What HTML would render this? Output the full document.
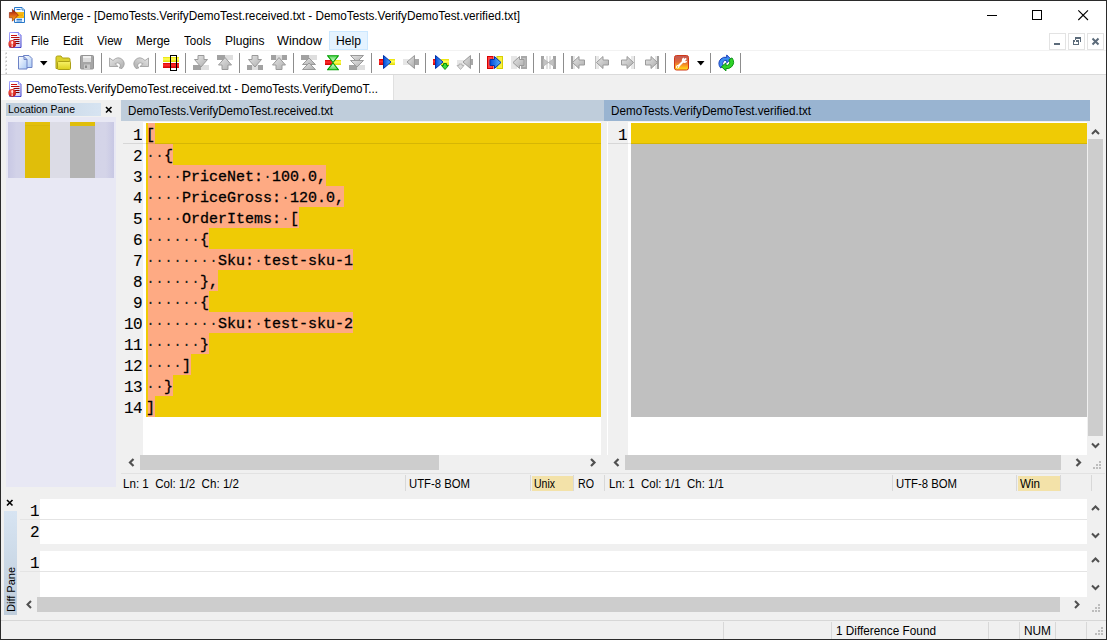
<!DOCTYPE html>
<html><head><meta charset="utf-8">
<style>
*{box-sizing:border-box;margin:0;padding:0}
html,body{width:1107px;height:640px;overflow:hidden;background:#f0f0f0}
body{position:relative;font-family:"Liberation Sans",sans-serif;font-size:12px;color:#000}
.a{position:absolute}
.t{position:absolute;white-space:nowrap;line-height:14px;transform-origin:0 50%}
.mono{font-family:"Liberation Mono",monospace;font-size:15px;line-height:21px;white-space:pre;-webkit-text-stroke:0.3px #000}
.ln{position:absolute;height:21px;left:0;right:0}
.num{position:absolute;text-align:right;font-family:"Liberation Mono",monospace;font-size:16px;letter-spacing:-0.6px;line-height:21px;padding-top:3px;height:21px;overflow:hidden;-webkit-text-stroke:0.12px #000}
.sal{background:linear-gradient(90deg,#efcb05 2px,#feaa83 2px);display:inline-block;height:21px;padding-top:4px;line-height:17px;vertical-align:top}
.d{-webkit-text-stroke:0;color:#222}
svg{position:absolute;overflow:visible}
</style></head><body>
<div class="a" style="left:1px;top:1px;width:1105px;height:49px;background:#fff;"></div>
<div class="a" style="left:1px;top:50px;width:1105px;height:1px;background:#f2f2f2;"></div>
<div class="a" style="left:1px;top:51px;width:1105px;height:23px;background:#fff;"></div>
<div class="a" style="left:1px;top:74px;width:1105px;height:1px;background:#dadada;"></div>
<div class="a" style="left:1px;top:75px;width:392px;height:25px;background:#fff;"></div>
<div class="a" style="left:393px;top:75px;width:1px;height:25px;background:#e0e0e0;"></div>
<svg style="left:8px;top:6px" width="18" height="18" viewBox="0 0 18 18"><path d="M6.500 1.500h7.500l2.500 2.500v12.500h-10z" fill="#f0f7ff" stroke="#2878c8"/><path d="M14 1.500v2.500h2.500" fill="#cfe4fa" stroke="#2878c8" stroke-width=".8"/><path d="M8.500 3.500h4M8.500 13.300h5.500M8.500 15h5.500" stroke="#2c7cd0" stroke-width="1.200"/><rect x="7" y="6.300" width="9" height="5.500" fill="#ffd028"/><rect x="7" y="6.300" width="9" height="1.300" fill="#f0a800"/><rect x="7" y="10.500" width="9" height="1.300" fill="#f0a800"/><rect x="10" y="8.300" width="5" height="1.500" fill="#f0a000"/><path d="M1.400 6.500h3v-3.300l6 5.800l-6 6.200v-3.400h-3z" fill="url(#garr)" stroke="#8c1800" stroke-width=".6" stroke-linejoin="round"/></svg>
<div class="t" style="left:30px;top:9px;font-size:12px;color:#000;transform:scaleX(0.9797);">WinMerge&nbsp;-&nbsp;[DemoTests.VerifyDemoTest.received.txt&nbsp;-&nbsp;DemoTests.VerifyDemoTest.verified.txt]</div>
<svg style="left:980px;top:1px" width="126" height="29" viewBox="0 0 126 29"><g stroke="#000" stroke-width="1" fill="none" shape-rendering="crispEdges"><path d="M7 14.500h10"/><rect x="52.500" y="9.500" width="9" height="9"/></g><path d="M98.300 9.300l9.700 9.700M108 9.300l-9.700 9.700" stroke="#000" stroke-width="1.100" fill="none"/></svg>
<svg style="left:6px;top:32px" width="16" height="17" viewBox="0 0 16 17"><path d="M3.500 .5h9l2.500 2.500v12.500h-11.500z" fill="url(#gmdif)" stroke="url(#gmdi)"/><path d="M12.500 .5v2.500h2.500" fill="#fff" stroke="#7878f8" stroke-width=".8"/><path d="M5 3.500h6M5 5.500h8.500M7.500 7.500h6M9 9.500h4.500M9 11.500h4.500" stroke="url(#grl)" stroke-width="1.100"/><circle cx="6.200" cy="11.900" r="3.800" fill="url(#gball)"/><path d="M6.200 9q1.200 1.200 0 3.500q-1.200-2.300 0-3.500z" fill="#fff" stroke="#fff" stroke-width=".6"/><circle cx="6.200" cy="14" r=".85" fill="#fff"/></svg>
<div class="a" style="left:329px;top:31px;width:39px;height:19px;background:#e5f3ff;border:1px solid #cce8ff"></div>
<div class="t" style="left:31px;top:34px;font-size:12px;color:#000;transform:scaleX(0.9310);">File</div>
<div class="t" style="left:63px;top:34px;font-size:12px;color:#000;transform:scaleX(0.9672);">Edit</div>
<div class="t" style="left:97px;top:34px;font-size:12px;color:#000;transform:scaleX(0.9693);">View</div>
<div class="t" style="left:136px;top:34px;font-size:12px;color:#000;transform:scaleX(0.9996);">Merge</div>
<div class="t" style="left:184px;top:34px;font-size:12px;color:#000;transform:scaleX(0.9639);">Tools</div>
<div class="t" style="left:225px;top:34px;font-size:12px;color:#000;transform:scaleX(1.0037);">Plugins</div>
<div class="t" style="left:277px;top:34px;font-size:12px;color:#000;transform:scaleX(1.0544);">Window</div>
<div class="t" style="left:336px;top:34px;font-size:12px;color:#000;transform:scaleX(1.0130);">Help</div>
<div class="a" style="left:1049px;top:33px;width:17px;height:17px;background:#fff;border:1px solid #e3e3e3"></div>
<div class="a" style="left:1068px;top:33px;width:17px;height:17px;background:#fff;border:1px solid #e3e3e3"></div>
<div class="a" style="left:1087px;top:33px;width:17px;height:17px;background:#fff;border:1px solid #e3e3e3"></div>
<svg style="left:1049px;top:33px" width="57" height="18" viewBox="0 0 57 18"><g fill="#5c6b7a" shape-rendering="crispEdges"><rect x="5" y="10" width="6" height="2"/><path d="M26 4h6v5h-1v-3h-4v3h-1zM24 7h6v5h-6zM25 9v2h4v-2z" fill-rule="evenodd"/></g><path d="M43.500 5.500l6 6M49.500 5.500l-6 6" stroke="#5c6b7a" stroke-width="2" fill="none"/></svg>
<svg width="0" height="0" style="left:0;top:0"><defs>
<linearGradient id="gdoc" x1="0" y1="0" x2="1" y2="1"><stop offset="0" stop-color="#fff"/><stop offset="1" stop-color="#a9c9f5"/></linearGradient>
<linearGradient id="gfold" x1="0" y1="0" x2="0" y2="1"><stop offset="0" stop-color="#f8f268"/><stop offset="1" stop-color="#dcd01c"/></linearGradient>
<linearGradient id="ggray" x1="0" y1="0" x2="1" y2="1"><stop offset="0" stop-color="#e6e6e6"/><stop offset="1" stop-color="#adadad"/></linearGradient>
<linearGradient id="gblue" x1="0" y1="0" x2="1" y2="0"><stop offset="0" stop-color="#0048d8"/><stop offset="1" stop-color="#58b4ff"/></linearGradient>
<linearGradient id="ggreen" x1="0" y1="0" x2="0" y2="1"><stop offset="0" stop-color="#50d850"/><stop offset="0.5" stop-color="#f4fff4"/><stop offset="1" stop-color="#50d850"/></linearGradient>
<linearGradient id="gyel" x1="0" y1="0" x2="0" y2="1"><stop offset="0" stop-color="#e8e000"/><stop offset="0.4" stop-color="#ffff60"/><stop offset="1" stop-color="#e0d800"/></linearGradient>
<linearGradient id="gred" x1="0" y1="0" x2="0" y2="1"><stop offset="0" stop-color="#d80000"/><stop offset="0.4" stop-color="#ff3030"/><stop offset="1" stop-color="#d00000"/></linearGradient>
<linearGradient id="gopt" x1="0" y1="0" x2="0" y2="1"><stop offset="0" stop-color="#c05858"/><stop offset="0.45" stop-color="#e06838"/><stop offset="0.75" stop-color="#ffa820"/><stop offset="1" stop-color="#ffe818"/></linearGradient>
<linearGradient id="garr" x1="0" y1="0" x2="0" y2="1"><stop offset="0" stop-color="#8c0c00"/><stop offset="0.45" stop-color="#d85818"/><stop offset="1" stop-color="#ffc010"/></linearGradient>
<linearGradient id="gmdi" x1="0" y1="0" x2="1" y2="1"><stop offset="0" stop-color="#a8a8ff"/><stop offset="1" stop-color="#3c3cc8"/></linearGradient>
<linearGradient id="gmdif" x1="0" y1="0" x2="1" y2="1"><stop offset="0.3" stop-color="#fff"/><stop offset="1" stop-color="#c0c0f8"/></linearGradient>
<linearGradient id="grl" x1="0" y1="0" x2="0" y2="1"><stop offset="0" stop-color="#d01010"/><stop offset="1" stop-color="#700000"/></linearGradient>
<radialGradient id="gball" cx="0.4" cy="0.35" r="0.7"><stop offset="0" stop-color="#ff6050"/><stop offset="1" stop-color="#c01010"/></radialGradient>
</defs></svg><svg style="left:4px;top:52px" width="4" height="22" viewBox="0 0 4 22"><g fill="#c2c2c2"><rect x="1.500" y="0.5" width="1.500" height="1.500"/><rect x="1" y="1.5" width="1" height="1" fill="#d8d8d8"/><rect x="1.500" y="4.5" width="1.500" height="1.500"/><rect x="1" y="5.5" width="1" height="1" fill="#d8d8d8"/><rect x="1.500" y="8.5" width="1.500" height="1.500"/><rect x="1" y="9.5" width="1" height="1" fill="#d8d8d8"/><rect x="1.500" y="12.5" width="1.500" height="1.500"/><rect x="1" y="13.5" width="1" height="1" fill="#d8d8d8"/><rect x="1.500" y="16.5" width="1.500" height="1.500"/><rect x="1" y="17.5" width="1" height="1" fill="#d8d8d8"/><rect x="1.500" y="20.5" width="1.500" height="1.500"/><rect x="1" y="21.5" width="1" height="1" fill="#d8d8d8"/></g></svg><svg style="left:18px;top:55px" width="16" height="16" viewBox="0 0 16 16"><path d="M5.5 .5h5.5l3 3v9h-8.5z" fill="url(#gdoc)" stroke="#6c82c6"/><path d="M.5 1.5h5.5l3 3v9.500h-8.5z" fill="url(#gdoc)" stroke="#6c82c6"/><path d="M6 1.500v3h3" fill="none" stroke="#6c82c6"/></svg><svg style="left:55px;top:55px" width="16" height="16" viewBox="0 0 16 16"><path d="M1 13.500v-11q0-1.500 1.500-1.500h3.500l1.500 2h6q1.500 0 1.500 1.500v9z" fill="#dcd22c" stroke="#aca016"/><rect x="2.500" y="6.500" width="13" height="8" rx="1" fill="url(#gfold)" stroke="#aca016"/></svg><svg style="left:80px;top:55px" width="16" height="16" viewBox="0 0 16 16"><rect x=".5" y=".5" width="13" height="13.500" rx="1" fill="#a6a6a6" stroke="#939393"/><rect x="3" y="1" width="8" height="6" fill="#dcdcdc"/><rect x="3" y="1" width="8" height="2" fill="#f0f0f0"/><rect x="4" y="9.500" width="6" height="4.500" fill="#c9c9c9"/><rect x="5" y="10.500" width="2" height="2.500" fill="#8c8c8c"/></svg><svg style="left:109px;top:57px" width="16" height="16" viewBox="0 0 16 16"><path d="M.5 1v8.500h8.500l-2.800-2.800q2.800-2 4.800 .3q1.300 2 -.8 4l2.800.5q4.200-4.500 .5-8.800q-4.500-4.200-9.500 .8z" fill="url(#ggray)" stroke="#9a9a9a" stroke-width=".8"/></svg><svg style="left:133px;top:57px" width="16" height="16" viewBox="0 0 16 16"><g transform="translate(16,0) scale(-1,1)"><path d="M.5 1v8.500h8.500l-2.800-2.800q2.800-2 4.800 .3q1.300 2 -.8 4l2.800.5q4.200-4.500 .5-8.800q-4.500-4.200-9.500 .8z" fill="url(#ggray)" stroke="#9a9a9a" stroke-width=".8"/></g></svg><svg style="left:163px;top:55px" width="16" height="16" viewBox="0 0 16 16"><rect x="0" y="2" width="16" height="5" fill="url(#gyel)"/><rect x="0" y="8" width="16" height="5" fill="url(#gred)"/><rect x="7.500" y=".5" width="6" height="15" fill="none" stroke="#000"/></svg><svg style="left:193px;top:55px" width="16" height="16" viewBox="0 0 16 16"><rect x="0" y="10" width="8" height="5" fill="#a2a2a2"/><rect x="8" y="10" width="8" height="5" fill="#dedede"/><path d="M5 .5h6v4h3.500l-6.500 7.500l-6.500-7.500h3.500z" fill="url(#ggray)" stroke="#9a9a9a"/></svg><svg style="left:217px;top:55px" width="16" height="16" viewBox="0 0 16 16"><rect x="0" y="0" width="8" height="5" fill="#a2a2a2"/><rect x="8" y="0" width="8" height="5" fill="#dedede"/><path d="M8 2.500l6.500 7.500h-3.500v4.500h-6v-4.500h-3.500z" fill="url(#ggray)" stroke="#9a9a9a"/></svg><svg style="left:247px;top:55px" width="16" height="16" viewBox="0 0 16 16"><rect x="0" y="10" width="5" height="5" fill="#a2a2a2"/><rect x="5" y="10" width="6" height="5" fill="#dedede"/><rect x="11" y="10" width="5" height="5" fill="#a2a2a2"/><path d="M5 .5h6v4h3.500l-6.500 7.500l-6.500-7.500h3.500z" fill="url(#ggray)" stroke="#9a9a9a"/></svg><svg style="left:271px;top:55px" width="16" height="16" viewBox="0 0 16 16"><rect x="0" y="0" width="5" height="5" fill="#a2a2a2"/><rect x="5" y="0" width="6" height="5" fill="#dedede"/><rect x="11" y="0" width="5" height="5" fill="#a2a2a2"/><path d="M8 2.500l6.500 7.500h-3.500v4.500h-6v-4.500h-3.500z" fill="url(#ggray)" stroke="#9a9a9a"/></svg><svg style="left:301px;top:55px" width="16" height="16" viewBox="0 0 16 16"><rect x="0" y="0" width="8" height="5" fill="#a2a2a2"/><rect x="8" y="0" width="8" height="5" fill="#dedede"/><path d="M8 3l6.500 6.500h-13z" fill="url(#ggray)" stroke="#9a9a9a"/><path d="M8 8l6.500 6.500h-13z" fill="url(#ggray)" stroke="#9a9a9a"/></svg><svg style="left:325px;top:55px" width="16" height="16" viewBox="0 0 16 16"><rect x="0" y="5" width="8" height="5" fill="url(#gred)"/><rect x="8" y="5" width="8" height="5" fill="url(#gyel)"/><path d="M2.500 .7h11l-5.500 6.800zM2.500 14.800h11l-5.500-6.800z" fill="url(#ggreen)" stroke="#00a000" stroke-width="1.100" stroke-linejoin="round"/></svg><svg style="left:349px;top:55px" width="16" height="16" viewBox="0 0 16 16"><rect x="0" y="10" width="8" height="5" fill="#a2a2a2"/><rect x="8" y="10" width="8" height="5" fill="#dedede"/><path d="M1.500 .5h13l-6.500 6.500z" fill="url(#ggray)" stroke="#9a9a9a"/><path d="M1.500 5.500h13l-6.500 6.500z" fill="url(#ggray)" stroke="#9a9a9a"/></svg><svg style="left:379px;top:55px" width="16" height="16" viewBox="0 0 16 16"><rect x="0" y="4" width="5" height="6" fill="url(#gred)"/><rect x="10" y="4" width="6" height="6" fill="url(#gyel)"/><path d="M4.500 .5l7.500 6.500l-7.500 6.500z" fill="url(#gblue)" stroke="#0030a8" stroke-linejoin="round"/></svg><svg style="left:403px;top:55px" width="16" height="16" viewBox="0 0 16 16"><rect x="0" y="4" width="6" height="6" fill="#e6e6e6"/><rect x="11" y="4" width="5" height="6" fill="#a8a8a8"/><path d="M11.500 .5l-7.500 6.500l7.500 6.500z" fill="url(#ggray)" stroke="#9a9a9a" stroke-linejoin="round"/></svg><svg style="left:433px;top:55px" width="16" height="16" viewBox="0 0 16 16"><rect x="0" y="4" width="3" height="6" fill="url(#gred)"/><rect x="8" y="4" width="8" height="6" fill="url(#gyel)"/><path d="M2.500 .5l7.500 6.500l-7.500 6.500z" fill="url(#gblue)" stroke="#0030a8" stroke-linejoin="round"/><path d="M10.500 8.500h3v2h2l-3.500 4l-3.500-4h2z" fill="#38dc38" stroke="#008800" stroke-width=".9"/></svg><svg style="left:457px;top:55px" width="16" height="16" viewBox="0 0 16 16"><rect x="0" y="5" width="8" height="5" fill="#e6e6e6"/><rect x="14" y="4" width="2" height="6" fill="#a8a8a8"/><path d="M2 9h3v1.500h2l-3.500 4l-3.500-4h2z" fill="#dcdcdc" stroke="#a8a8a8" stroke-width=".8"/><path d="M13.500 .5l-7.500 6.500l7.500 6.500z" fill="url(#ggray)" stroke="#9a9a9a" stroke-linejoin="round"/></svg><svg style="left:487px;top:55px" width="16" height="16" viewBox="0 0 16 16"><rect x=".5" y="1.500" width="5.500" height="12" fill="#ff4040" stroke="#d80000"/><rect x="10" y="1.500" width="5.500" height="12" fill="#f8f040" stroke="#d8d000"/><path d="M3 4.500h4.500v-3l6.500 6l-6.500 6v-3h-4.500z" fill="url(#gblue)" stroke="#0030a8" stroke-linejoin="round"/></svg><svg style="left:511px;top:55px" width="16" height="16" viewBox="0 0 16 16"><rect x="0" y="1" width="6" height="13" fill="#e6e6e6"/><rect x="10" y="1" width="6" height="13" fill="#a8a8a8"/><rect x="11.500" y="3" width="3" height="9" fill="#c4c4c4"/><path d="M13 4.500h-4.500v-3l-6.500 6l6.500 6v-3h4.500z" fill="url(#ggray)" stroke="#9a9a9a" stroke-linejoin="round"/></svg><svg style="left:541px;top:55px" width="16" height="16" viewBox="0 0 16 16"><rect x="0" y="1" width="3" height="13" fill="#a4a4a4"/><rect x="12" y="1" width="3" height="13" fill="#a4a4a4"/><rect x="5" y="1" width="2" height="13" fill="#e2e2e2"/><rect x="8" y="1" width="2" height="13" fill="#e2e2e2"/><path d="M2 3.500l5.500 4l-5.500 4zM13 3.500l-5.500 4l5.500 4z" fill="#c2c2c2" stroke="#a8a8a8" stroke-width=".6"/></svg><svg style="left:571px;top:55px" width="16" height="16" viewBox="0 0 16 16"><rect x="0" y="1" width="2" height="13" fill="#a0a0a0"/><rect x="2" y="1" width="2" height="13" fill="#e6e6e6"/><path d="M1.500 7.500l6.500-6v3.500h5.500v5h-5.500v3.500z" fill="url(#ggray)" stroke="#9a9a9a" stroke-linejoin="round"/></svg><svg style="left:595px;top:55px" width="16" height="16" viewBox="0 0 16 16"><rect x="0" y="1" width="4" height="13" fill="#e8e8e8"/><rect x="0" y="1" width="1" height="13" fill="#c0c0c0"/><path d="M1.500 7.500l6.500-6v3.500h5.500v5h-5.500v3.500z" fill="url(#ggray)" stroke="#9a9a9a" stroke-linejoin="round"/></svg><svg style="left:621px;top:55px" width="16" height="16" viewBox="0 0 16 16"><rect x="10" y="1" width="4" height="13" fill="#e8e8e8"/><rect x="13" y="1" width="1" height="13" fill="#c0c0c0"/><path d="M12.500 7.500l-6.500-6v3.500h-5.500v5h5.500v3.500z" fill="url(#ggray)" stroke="#9a9a9a" stroke-linejoin="round"/></svg><svg style="left:645px;top:55px" width="16" height="16" viewBox="0 0 16 16"><rect x="10" y="1" width="2" height="13" fill="#e6e6e6"/><rect x="12" y="1" width="2" height="13" fill="#a0a0a0"/><path d="M12.500 7.500l-6.500-6v3.500h-5.500v5h5.500v3.500z" fill="url(#ggray)" stroke="#9a9a9a" stroke-linejoin="round"/></svg><svg style="left:674px;top:55px" width="16" height="16" viewBox="0 0 16 16"><rect x=".5" y=".5" width="14" height="14.500" rx="2" fill="url(#gopt)" stroke="#d03818"/><path d="M3.500 12l8-8" stroke="#fff" stroke-width="2" stroke-linecap="round"/><path d="M10 2.500a2.800 2.800 0 1 0 3.300 3.300l-1.800 .4l-1.600-1.600z" fill="#fff"/><circle cx="3.700" cy="11.800" r="1.700" fill="#fff"/><circle cx="3.600" cy="12" r=".7" fill="#f0a020"/></svg><svg style="left:718px;top:55px" width="16" height="16" viewBox="0 0 16 16"><g transform="translate(-.3,-.3) scale(1.060)"><path d="M2.800 12.500q-3.500-4.500 .2-8.500q2.500-2.300 5.500-1.500v-2.300l4 4l-4 3.500v-2.300q-2-.5-3.200 1q-1.600 2 .3 4.300z" fill="#3c8cf0" stroke="#1038b8" stroke-width=".9" stroke-linejoin="round"/><path d="M13.500 3q3.300 4.500 -.5 8.500q-2.500 2.200-5.200 1.600v2.200l-4.300-4l4.300-3.500v2.300q1.800 .3 3-1.100q1.500-2-.2-4.200z" fill="#30d428" stroke="#089010" stroke-width=".9" stroke-linejoin="round"/></g></svg><div class="a" style="left:101px;top:53px;width:1px;height:20px;background:#8d8d8d"></div><div class="a" style="left:155px;top:53px;width:1px;height:20px;background:#8d8d8d"></div><div class="a" style="left:185px;top:53px;width:1px;height:20px;background:#8d8d8d"></div><div class="a" style="left:239px;top:53px;width:1px;height:20px;background:#8d8d8d"></div><div class="a" style="left:293px;top:53px;width:1px;height:20px;background:#8d8d8d"></div><div class="a" style="left:371px;top:53px;width:1px;height:20px;background:#8d8d8d"></div><div class="a" style="left:425px;top:53px;width:1px;height:20px;background:#8d8d8d"></div><div class="a" style="left:479px;top:53px;width:1px;height:20px;background:#8d8d8d"></div><div class="a" style="left:533px;top:53px;width:1px;height:20px;background:#8d8d8d"></div><div class="a" style="left:563px;top:53px;width:1px;height:20px;background:#8d8d8d"></div><div class="a" style="left:665px;top:53px;width:1px;height:20px;background:#8d8d8d"></div><div class="a" style="left:710px;top:53px;width:1px;height:20px;background:#8d8d8d"></div><div class="a" style="left:740px;top:53px;width:1px;height:20px;background:#8d8d8d"></div><svg style="left:40px;top:61px" width="8" height="5" viewBox="0 0 8 5"><path d="M0 0h7.500l-3.750 4.500z" fill="#000"/></svg><svg style="left:697px;top:61px" width="8" height="5" viewBox="0 0 8 5"><path d="M0 0h7.500l-3.750 4.500z" fill="#000"/></svg>
<svg style="left:6px;top:81px" width="16" height="17" viewBox="0 0 16 17"><path d="M3.500 .5h9l2.500 2.500v12.500h-11.500z" fill="url(#gmdif)" stroke="url(#gmdi)"/><path d="M12.500 .5v2.500h2.500" fill="#fff" stroke="#7878f8" stroke-width=".8"/><path d="M5 3.500h6M5 5.500h8.500M7.500 7.500h6M9 9.500h4.500M9 11.500h4.500" stroke="url(#grl)" stroke-width="1.100"/><circle cx="6.200" cy="11.900" r="3.800" fill="url(#gball)"/><path d="M6.200 9q1.200 1.200 0 3.500q-1.200-2.300 0-3.500z" fill="#fff" stroke="#fff" stroke-width=".6"/><circle cx="6.200" cy="14" r=".85" fill="#fff"/></svg>
<div class="t" style="left:26px;top:82px;font-size:12px;color:#000;transform:scaleX(0.9667);">DemoTests.VerifyDemoTest.received.txt&nbsp;-&nbsp;DemoTests.VerifyDemoT...</div>
<div class="a" style="left:6px;top:103px;width:95px;height:13px;background:linear-gradient(90deg,#bfcddb,#d7e4f2);"></div>
<div class="t" style="left:8px;top:102px;font-size:11px;color:#000;transform:scaleX(0.9526);">Location&nbsp;Pane</div>
<svg style="left:105px;top:106px" width="8" height="8" viewBox="0 0 8 8"><path d="M1 1l5.5 5.5M6.5 1L1 6.5" stroke="#000" stroke-width="1.6" fill="none"/></svg>
<div class="a" style="left:6px;top:117px;width:110px;height:370px;background:#e8e8f4;"></div>
<div class="a" style="left:8px;top:122px;width:106px;height:56px;background:linear-gradient(90deg,#c8c8e4,#d2d2e8 8%,#d4d4e8 92%,#c8c8e4);"></div>
<div class="a" style="left:25px;top:122px;width:25px;height:56px;background:#e0be0a;"></div>
<div class="a" style="left:25px;top:122px;width:25px;height:4px;background:#e3c00a;border-bottom:1px solid #d9b80a"></div>
<div class="a" style="left:50px;top:122px;width:20px;height:56px;background:#dcdce6;"></div>
<div class="a" style="left:70px;top:122px;width:25px;height:56px;background:#b4b4b4;"></div>
<div class="a" style="left:70px;top:122px;width:25px;height:4px;background:#e0be0a;"></div>
<div class="a" style="left:121px;top:100px;width:483px;height:21px;background:#bfcddb;"></div>
<div class="t" style="left:128px;top:104px;font-size:12px;color:#000;transform:scaleX(0.9666);">DemoTests.VerifyDemoTest.received.txt</div>
<div class="a" style="left:604px;top:100px;width:486px;height:21px;background:#99b4d1;"></div>
<div class="t" style="left:611px;top:104px;font-size:12px;color:#000;transform:scaleX(0.9737);">DemoTests.VerifyDemoTest.verified.txt</div>
<div class="a" style="left:123px;top:122px;width:478px;height:333px;background:#fff;"></div>
<div class="a" style="left:123px;top:122px;width:20px;height:333px;background:#f0f0f0;"></div>
<div class="a" style="left:146px;top:123px;width:455px;height:294px;background:#efcb05;"></div>
<div class="num" style="left:118px;top:123px;width:24px">1</div>
<div class="a mono" style="left:146px;top:123px;height:21px"><span class="sal">[</span></div>
<div class="num" style="left:118px;top:144px;width:24px">2</div>
<div class="a mono" style="left:146px;top:144px;height:21px"><span class="sal"><span class="d">··</span>{</span></div>
<div class="num" style="left:118px;top:165px;width:24px">3</div>
<div class="a mono" style="left:146px;top:165px;height:21px"><span class="sal"><span class="d">····</span>PriceNet:<span class="d">·</span>100.0,</span></div>
<div class="num" style="left:118px;top:186px;width:24px">4</div>
<div class="a mono" style="left:146px;top:186px;height:21px"><span class="sal"><span class="d">····</span>PriceGross:<span class="d">·</span>120.0,</span></div>
<div class="num" style="left:118px;top:207px;width:24px">5</div>
<div class="a mono" style="left:146px;top:207px;height:21px"><span class="sal"><span class="d">····</span>OrderItems:<span class="d">·</span>[</span></div>
<div class="num" style="left:118px;top:228px;width:24px">6</div>
<div class="a mono" style="left:146px;top:228px;height:21px"><span class="sal"><span class="d">······</span>{</span></div>
<div class="num" style="left:118px;top:249px;width:24px">7</div>
<div class="a mono" style="left:146px;top:249px;height:21px"><span class="sal"><span class="d">········</span>Sku:<span class="d">·</span>test-sku-1</span></div>
<div class="num" style="left:118px;top:270px;width:24px">8</div>
<div class="a mono" style="left:146px;top:270px;height:21px"><span class="sal"><span class="d">······</span>},</span></div>
<div class="num" style="left:118px;top:291px;width:24px">9</div>
<div class="a mono" style="left:146px;top:291px;height:21px"><span class="sal"><span class="d">······</span>{</span></div>
<div class="num" style="left:118px;top:312px;width:24px">10</div>
<div class="a mono" style="left:146px;top:312px;height:21px"><span class="sal"><span class="d">········</span>Sku:<span class="d">·</span>test-sku-2</span></div>
<div class="num" style="left:118px;top:333px;width:24px">11</div>
<div class="a mono" style="left:146px;top:333px;height:21px"><span class="sal"><span class="d">······</span>}</span></div>
<div class="num" style="left:118px;top:354px;width:24px">12</div>
<div class="a mono" style="left:146px;top:354px;height:21px"><span class="sal"><span class="d">····</span>]</span></div>
<div class="num" style="left:118px;top:375px;width:24px">13</div>
<div class="a mono" style="left:146px;top:375px;height:21px"><span class="sal"><span class="d">··</span>}</span></div>
<div class="num" style="left:118px;top:396px;width:24px">14</div>
<div class="a mono" style="left:146px;top:396px;height:21px"><span class="sal">]</span></div>
<div class="a" style="left:123px;top:143px;width:478px;height:1px;background:rgba(0,0,0,0.10);"></div>
<div class="a" style="left:123px;top:455px;width:478px;height:17px;background:#f0f0f0;"></div>
<div class="a" style="left:140px;top:455px;width:299px;height:15px;background:#cdcdcd;"></div>
<svg style="left:123px;top:455px" width="478" height="17" viewBox="0 0 478 17"><g stroke="#505050" stroke-width="2.200" fill="none"><path d="M10.500 4L7 7.500l3.500 3.500"/><path d="M468 4l3.500 3.500L468 11"/></g></svg>
<div class="a" style="left:121px;top:473px;width:984px;height:1px;background:#e2e2e2;"></div>
<div class="t" style="left:123px;top:477px;font-size:12px;color:#000;transform:scaleX(0.9661);">Ln:&nbsp;1&nbsp;&nbsp;Col:&nbsp;1/2&nbsp;&nbsp;Ch:&nbsp;1/2</div>
<div class="a" style="left:405px;top:475px;width:1px;height:16px;background:#d8d8d8;"></div>
<div class="t" style="left:409px;top:477px;font-size:12px;color:#000;transform:scaleX(0.9433);">UTF-8&nbsp;BOM</div>
<div class="a" style="left:530px;top:475px;width:1px;height:16px;background:#d8d8d8;"></div>
<div class="a" style="left:532px;top:476px;width:41px;height:15px;background:#f3e2a9;"></div>
<div class="t" style="left:534px;top:477px;font-size:12px;color:#000;transform:scaleX(0.8748);">Unix</div>
<div class="a" style="left:573px;top:475px;width:1px;height:16px;background:#d8d8d8;"></div>
<div class="t" style="left:578px;top:477px;font-size:12px;color:#000;transform:scaleX(0.8889);">RO</div>
<div class="a" style="left:604px;top:122px;width:483px;height:333px;background:#fff;"></div>
<div class="a" style="left:608px;top:122px;width:20px;height:333px;background:#f0f0f0;"></div>
<div class="a" style="left:601px;top:122px;width:6px;height:350px;background:#f0f0f0;"></div>
<div class="a" style="left:631px;top:123px;width:456px;height:21px;background:#efcb05;"></div>
<div class="a" style="left:631px;top:144px;width:456px;height:273px;background:#c0c0c0;"></div>
<div class="a" style="left:608px;top:143px;width:479px;height:1px;background:rgba(0,0,0,0.10);"></div>
<div class="num" style="left:602px;top:123px;width:25px">1</div>
<div class="a" style="left:1087px;top:122px;width:17px;height:333px;background:#f0f0f0;"></div>
<div class="a" style="left:1088px;top:139px;width:15px;height:297px;background:#cdcdcd;"></div>
<svg style="left:1087px;top:122px" width="17" height="332" viewBox="0 0 17 332"><g stroke="#505050" stroke-width="2" fill="none"><path d="M5 12l3.5-3.5L12 12"/><path d="M5 321.500l3.500 3.500L12 321.500"/></g></svg>
<div class="a" style="left:606px;top:455px;width:481px;height:17px;background:#f0f0f0;"></div>
<div class="a" style="left:625px;top:455px;width:436px;height:15px;background:#cdcdcd;"></div>
<svg style="left:606px;top:455px" width="498" height="17" viewBox="0 0 498 17"><g stroke="#505050" stroke-width="2.200" fill="none"><path d="M12.500 4L9 7.500l3.500 3.500"/><path d="M470.500 4l3.500 3.500L470.500 11"/></g><g fill="#bdbdbd"><rect x="493" y="6" width="2" height="2"/><rect x="493" y="9" width="2" height="2"/><rect x="493" y="12" width="2" height="2"/><rect x="490" y="9" width="2" height="2"/><rect x="490" y="12" width="2" height="2"/><rect x="487" y="12" width="2" height="2"/></g></svg>
<div class="a" style="left:604px;top:475px;width:1px;height:16px;background:#d8d8d8;"></div>
<div class="t" style="left:609px;top:477px;font-size:12px;color:#000;transform:scaleX(0.9578);">Ln:&nbsp;1&nbsp;&nbsp;Col:&nbsp;1/1&nbsp;&nbsp;Ch:&nbsp;1/1</div>
<div class="a" style="left:892px;top:475px;width:1px;height:16px;background:#d8d8d8;"></div>
<div class="t" style="left:896px;top:477px;font-size:12px;color:#000;transform:scaleX(0.9433);">UTF-8&nbsp;BOM</div>
<div class="a" style="left:1016px;top:475px;width:1px;height:16px;background:#d8d8d8;"></div>
<div class="a" style="left:1018px;top:476px;width:42px;height:15px;background:#f3e2a9;"></div>
<div class="t" style="left:1020px;top:477px;font-size:12px;color:#000;transform:scaleX(0.9678);">Win</div>
<div class="a" style="left:1060px;top:475px;width:1px;height:16px;background:#d8d8d8;"></div>
<div class="a" style="left:1091px;top:475px;width:1px;height:16px;background:#d8d8d8;"></div>
<svg style="left:6px;top:499px" width="8" height="8" viewBox="0 0 8 8"><path d="M1 1l5.5 5.5M6.5 1L1 6.5" stroke="#000" stroke-width="1.6" fill="none"/></svg>
<div class="a" style="left:4px;top:511px;width:13px;height:104px;background:linear-gradient(0deg,#bfcddb,#d7e4f2);"></div>
<div class="t" style="left:5px;top:612px;font-size:11px;transform-origin:0 0;transform:rotate(-90deg) scaleX(1.0);line-height:13px">Diff&nbsp;Pane</div>
<div class="a" style="left:20px;top:499px;width:1067px;height:45px;background:#fff;"></div>
<div class="a" style="left:20px;top:499px;width:20px;height:45px;background:#f0f0f0;"></div>
<div class="a" style="left:20px;top:519px;width:1067px;height:1px;background:#e4e4e4;"></div>
<div class="num" style="left:15px;top:499px;width:24px">1</div>
<div class="num" style="left:15px;top:520px;width:24px">2</div>
<div class="a" style="left:1087px;top:499px;width:17px;height:45px;background:#f0f0f0;"></div>
<svg style="left:1087px;top:499px" width="17" height="45" viewBox="0 0 17 45"><g stroke="#505050" stroke-width="2" fill="none"><path d="M5 11l3.500-3.500L12 11"/><path d="M5 34.500l3.500 3.500L12 34.500"/></g></svg>
<div class="a" style="left:20px;top:551px;width:1067px;height:46px;background:#fff;"></div>
<div class="a" style="left:20px;top:551px;width:20px;height:46px;background:#f0f0f0;"></div>
<div class="a" style="left:20px;top:571px;width:1067px;height:1px;background:#e4e4e4;"></div>
<div class="num" style="left:15px;top:551px;width:24px">1</div>
<div class="a" style="left:1087px;top:551px;width:17px;height:45px;background:#f0f0f0;"></div>
<svg style="left:1087px;top:551px" width="17" height="45" viewBox="0 0 17 45"><g stroke="#505050" stroke-width="2" fill="none"><path d="M5 11l3.500-3.500L12 11"/><path d="M5 34.500l3.500 3.500L12 34.500"/></g></svg>
<div class="a" style="left:20px;top:597px;width:1084px;height:16px;background:#f0f0f0;"></div>
<div class="a" style="left:37px;top:597px;width:1023px;height:15px;background:#cdcdcd;"></div>
<svg style="left:20px;top:597px" width="1084" height="16" viewBox="0 0 1084 16"><g stroke="#505050" stroke-width="2" fill="none"><path d="M11 4L7.500 7.500l3.500 3.500"/><path d="M1055 4l3.500 3.500l-3.500 3.500"/></g><g fill="#bdbdbd"><rect x="1078" y="7" width="2" height="2"/><rect x="1078" y="10" width="2" height="2"/><rect x="1078" y="13" width="2" height="2"/><rect x="1075" y="10" width="2" height="2"/><rect x="1075" y="13" width="2" height="2"/><rect x="1072" y="13" width="2" height="2"/></g></svg>
<div class="a" style="left:1px;top:620px;width:1105px;height:1px;background:#d7d7d7;"></div>
<div class="a" style="left:723px;top:622px;width:1px;height:17px;background:#d8d8d8;"></div>
<div class="a" style="left:831px;top:622px;width:1px;height:17px;background:#d8d8d8;"></div>
<div class="a" style="left:988px;top:622px;width:1px;height:17px;background:#d8d8d8;"></div>
<div class="a" style="left:1019px;top:622px;width:1px;height:17px;background:#d8d8d8;"></div>
<div class="a" style="left:1055px;top:622px;width:1px;height:17px;background:#d8d8d8;"></div>
<div class="a" style="left:1086px;top:622px;width:1px;height:17px;background:#d8d8d8;"></div>
<div class="t" style="left:836px;top:624px;font-size:12px;color:#000;transform:scaleX(0.9819);">1&nbsp;Difference&nbsp;Found</div>
<div class="t" style="left:1024px;top:624px;font-size:12px;color:#000;transform:scaleX(0.9880);">NUM</div>
<svg style="left:1092px;top:626px" width="12" height="12" viewBox="0 0 12 12"><g fill="#bdbdbd"><rect x="9" y="1" width="2" height="2"/><rect x="9" y="4" width="2" height="2"/><rect x="9" y="7" width="2" height="2"/><rect x="6" y="4" width="2" height="2"/><rect x="6" y="7" width="2" height="2"/><rect x="3" y="7" width="2" height="2"/></g></svg>
<div class="a" style="left:0;top:0;width:1107px;height:640px;border:1px solid #2b2b2b;z-index:50"></div>
</body></html>
